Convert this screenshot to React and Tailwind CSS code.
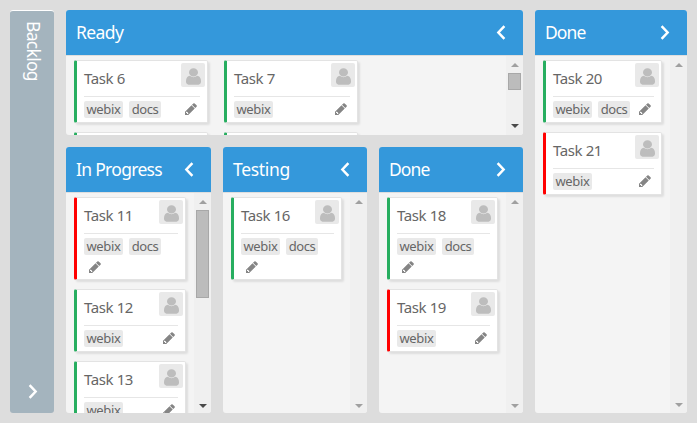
import React from 'react';

function Chevron({ dir }) {
  return (
    <svg className="block h-[15px] w-[10px] shrink-0" viewBox="0 0 10 15" fill="none" stroke="#fff" strokeWidth="2.5">
      <path d={dir === 'left' ? 'M8.4 1.2 2.4 7.5l6 6.3' : 'M1.6 1.2l6 6.3-6 6.3'} />
    </svg>
  );
}

function UserIcon() {
  return (
    <svg className="mt-[2px] block h-[19px] w-[21px]" viewBox="0 0 1792 1792" preserveAspectRatio="none" fill="#bdbdbd">
      <path d="M1536 1399q0 109-62.5 187t-150.5 78h-854q-88 0-150.5-78t-62.5-187q0-85 8.5-160.5t31.5-152 58.5-131 94-89 134.5-34.5q131 128 313 128t313-128q76 0 134.5 34.5t94 89 58.5 131 31.5 152 8.5 160.5zm-256-887q0 159-112.5 271.5t-271.5 112.5-271.5-112.5-112.5-271.5 112.5-271.5 271.5-112.5 271.5 112.5 112.5 271.5z" />
    </svg>
  );
}

function Pencil() {
  return (
    <svg className="block h-[14px] w-[14px]" viewBox="0 0 1792 1792" fill="#858585">
      <path d="M491 1536l91-91-235-235-91 91v107h128v128h107zm469-1120l416 416-832 832h-416v-416zm683 96q0 53-37 90l-166 166-416-416 166-165q36-38 90-38 53 0 91 38l235 234q37 39 37 91z" />
    </svg>
  );
}

function Tag({ name }) {
  return (
    <span
      className={`flex h-[17px] items-center justify-center rounded-[2px] bg-[#e9e9e9] text-[13px] leading-[17px] text-[#666] ${
        name === 'webix' ? 'w-[39px] tracking-[-0.35px]' : 'w-[32px] tracking-[-0.5px]'
      }`}
    >
      {name}
    </span>
  );
}

function Card({ id, tags, width, red, wrap }) {
  return (
    <div
      className={`flex shrink-0 flex-col rounded-[2px] border-y border-r border-l-[3px] border-y-[#e3e3e3] border-r-[#e3e3e3] bg-white shadow-[2px_2px_2px_#dedede] ${width} ${
        red ? 'border-l-[#ff0000]' : 'border-l-[#27ae60]'
      } ${wrap ? 'h-[83px]' : 'h-[63px]'}`}
    >
      <div className="flex h-[35px] shrink-0 justify-between pt-[2px] pr-[2px] pl-[7px]">
        <span className="pt-[3px] text-[15px] leading-[24px] tracking-[-0.4px] whitespace-nowrap text-[#666]">Task {id}</span>
        <span className="flex h-6 w-6 shrink-0 items-center justify-center rounded-[2px] bg-[#e9e9e9]">
          <UserIcon />
        </span>
      </div>
      <div className="mr-[7px] ml-[7px] h-px shrink-0 bg-[#e6e6e6]" />
      <div className="flex justify-between px-[7px] pt-[4px]">
        <div className="flex gap-[6px]">
          {tags.map((t) => (
            <Tag key={t} name={t} />
          ))}
        </div>
        {!wrap && (
          <span className="mr-[2px] pt-[1px]">
            <Pencil />
          </span>
        )}
      </div>
      {wrap && (
        <div className="pt-[5px] pl-[11px]">
          <Pencil />
        </div>
      )}
    </div>
  );
}

function CardEdge() {
  return (
    <div className="h-[63px] w-[134px] shrink-0 rounded-[2px] border-y border-r border-l-[3px] border-y-[#e3e3e3] border-r-[#e3e3e3] border-l-[#27ae60] bg-white shadow-[2px_2px_2px_#dedede]" />
  );
}

function Arrow({ up, dark }) {
  return (
    <svg className="block h-[4px] w-[8px]" viewBox="0 0 8 4" fill={dark ? '#4a4a4a' : '#a0a0a0'}>
      <path d={up ? 'M0 4 4 0l4 4z' : 'M0 0h8L4 4z'} />
    </svg>
  );
}

function Scrollbar({ thumb, pad }) {
  return (
    <div className={`flex w-[17px] shrink-0 flex-col items-center justify-between bg-[#f0f0f0] pt-[7px] ${pad}`}>
      <div className="flex flex-col items-center gap-[6px]">
        <Arrow up />
        {thumb && <div className={`w-[13px] border border-[#a8a8a8] bg-[#bcbcbc] ${thumb}`} />}
      </div>
      <Arrow dark={!!thumb} />
    </div>
  );
}

function Panel({ title, dir, thumb, className, tracking, pad = 'pb-[5px]', children }) {
  return (
    <section className={`flex flex-col overflow-hidden rounded-[3px] bg-[#f4f4f4] ${className}`}>
      <header className="flex h-[45px] shrink-0 items-center justify-between bg-[#3498db] pr-[17px] pl-[10px]">
        <h2 className={`pb-[2px] text-[17.5px] leading-[24px] whitespace-nowrap text-white ${tracking}`}>{title}</h2>
        <Chevron dir={dir} />
      </header>
      <div className="flex min-h-0 flex-1 border-t border-[#dedede]">
        <div className="min-w-0 flex-1 overflow-hidden pt-[4px] pl-[8px]">{children}</div>
        <Scrollbar thumb={thumb} pad={pad} />
      </div>
    </section>
  );
}

export default function App() {
  return (
    <main className="flex h-[423px] w-[697px] gap-3 overflow-hidden bg-[#dddddd] p-[10px] font-['Noto_Sans','Open_Sans',sans-serif]">
      <aside className="flex w-[44px] shrink-0 flex-col items-center justify-between rounded-[3px] border-t border-white bg-[#a4b4be] pt-[10px] pb-[14px]">
        <span className="ml-[3px] text-[17.5px] leading-[24px] tracking-[-0.7px] text-white [writing-mode:vertical-rl]">Backlog</span>
        <div className="pl-[2px]">
          <Chevron dir="right" />
        </div>
      </aside>
      <div className="flex w-[457px] shrink-0 flex-col gap-3">
        <Panel title="Ready" dir="left" thumb="h-[17px]" className="h-[125px] shrink-0" tracking="tracking-[-0.6px]" pad="pb-[7px]">
          <div className="flex flex-wrap gap-x-4 gap-y-[9px]">
            <Card id={6} tags={['webix', 'docs']} width="w-[134px]" />
            <Card id={7} tags={['webix']} width="w-[134px]" />
            <div className="w-[100px]" />
            <CardEdge />
            <CardEdge />
          </div>
        </Panel>
        <div className="flex min-h-0 flex-1 gap-3">
          <Panel title="In Progress" dir="left" thumb="h-[88px]" className="w-[145px] shrink-0" tracking="tracking-[-0.7px]">
            <div className="flex flex-col gap-[9px]">
              <Card id={11} tags={['webix', 'docs']} width="w-[112px]" red wrap />
              <Card id={12} tags={['webix']} width="w-[112px]" />
              <Card id={13} tags={['webix']} width="w-[112px]" />
            </div>
          </Panel>
          <Panel title="Testing" dir="left" className="w-[144px] shrink-0" tracking="tracking-[-0.3px]">
            <Card id={16} tags={['webix', 'docs']} width="w-[111px]" wrap />
          </Panel>
          <Panel title="Done" dir="right" className="w-[144px] shrink-0" tracking="tracking-[-0.9px]">
            <div className="flex flex-col gap-[9px]">
              <Card id={18} tags={['webix', 'docs']} width="w-[111px]" wrap />
              <Card id={19} tags={['webix']} width="w-[111px]" red />
            </div>
          </Panel>
        </div>
      </div>
      <Panel title="Done" dir="right" className="w-[152px] shrink-0" tracking="tracking-[-0.9px]" pad="pb-[6px]">
        <div className="flex flex-col gap-[9px]">
          <Card id={20} tags={['webix', 'docs']} width="w-[119px]" />
          <Card id={21} tags={['webix']} width="w-[119px]" red />
        </div>
      </Panel>
    </main>
  );
}
